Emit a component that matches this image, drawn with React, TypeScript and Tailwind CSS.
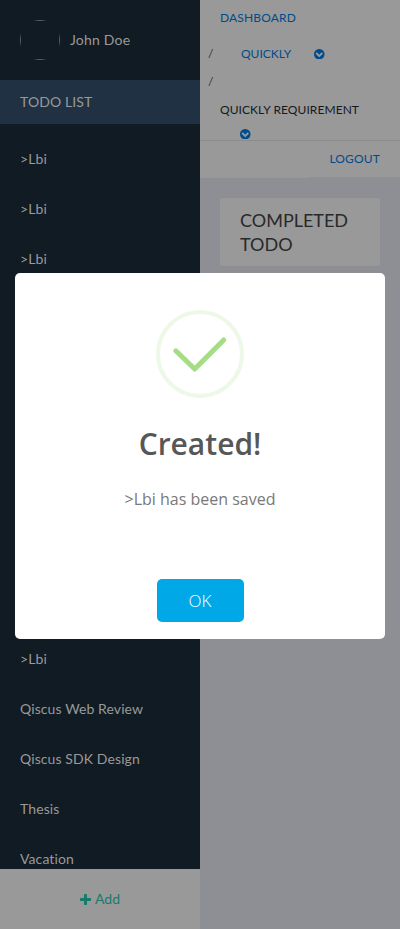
const todos = [
  ...Array.from({ length: 11 }, () => '>Lbi'),
  'Qiscus Web Review',
  'Qiscus SDK Design',
  'Thesis',
  'Vacation',
];

function ChevronCircle() {
  return (
    <svg width="10.5" height="10.5" viewBox="128 128 1536 1536" fill="currentColor">
      <path d="M941 1299l454-454q19-19 19-45t-19-45l-102-102q-19-19-45-19t-45 19l-307 307-307-307q-19-19-45-19t-45 19l-102 102q-19 19-19 45t19 45l454 454q19 19 45 19t45-19zm723-403q0 209-103 385.5t-279.5 279.5-385.5 103-385.5-103-279.5-279.5-103-385.5 103-385.5 279.5-279.5 385.5-103 385.5 103 279.5 279.5 103 385.5z" />
    </svg>
  );
}

function PlusIcon() {
  return (
    <svg width="11" height="11" viewBox="192 128 1408 1408" fill="currentColor">
      <path d="M1600 736v192q0 40-28 68t-68 28h-416v416q0 40-28 68t-68 28h-192q-40 0-68-28t-28-68v-416h-416q-40 0-68-28t-28-68v-192q0-40 28-68t68-28h416v-416q0-40 28-68t68-28h192q40 0 68 28t28 68v416h416q40 0 68 28t28 68z" />
    </svg>
  );
}

function AvatarOutline() {
  return (
    <svg width="40" height="40" viewBox="0 0 40 40">
      <defs>
        <linearGradient id="fadeX">
          <stop stopColor="#626669" stopOpacity="0" />
          <stop offset=".5" stopColor="#626669" />
          <stop offset="1" stopColor="#626669" stopOpacity="0" />
        </linearGradient>
        <linearGradient id="fadeY" x2="0" y2="1">
          <stop stopColor="#626669" stopOpacity="0" />
          <stop offset=".5" stopColor="#626669" />
          <stop offset="1" stopColor="#626669" stopOpacity="0" />
        </linearGradient>
      </defs>
      <rect x="13" width="14" height="1" fill="url(#fadeX)" />
      <rect x="13" y="39" width="14" height="1" fill="url(#fadeX)" />
      <rect y="13" width="1" height="14" fill="url(#fadeY)" />
      <rect x="39" y="13" width="1" height="14" fill="url(#fadeY)" />
    </svg>
  );
}

function Sidebar() {
  return (
    <aside className="flex h-full w-[200px] shrink-0 flex-col bg-[#111b23] text-sm tracking-[0.1px] text-[#999]">
      <div className="flex h-20 shrink-0 items-center gap-2.5 px-5">
        <AvatarOutline />
        <span className="tracking-[0.2px]">John Doe</span>
      </div>
      <h2 className="flex h-11 shrink-0 items-center bg-[#1f3142] px-5">TODO LIST</h2>
      <ul className="min-h-0 flex-1 overflow-hidden pt-2.5">
        {todos.map((todo, i) => (
          <li key={i} className="flex h-[50px] items-center px-5">{todo}</li>
        ))}
      </ul>
      <button className="flex h-[60px] shrink-0 items-center justify-center gap-1 bg-[#999] text-[#167b6d]">
        <PlusIcon />
        <span className="tracking-normal">Add</span>
      </button>
    </aside>
  );
}

function Main() {
  return (
    <main className="min-w-0 flex-1">
      <nav className="h-[141px] border-b border-[#8d8d8d] bg-[#999] text-xs text-[#004c8b]">
        <div className="flex h-9 items-center px-5 tracking-[0.15px]">DASHBOARD</div>
        <div className="flex h-9 items-center pl-2">
          <span className="w-[33px] text-[#333]">/</span>
          <span className="w-[73px]">QUICKLY</span>
          <ChevronCircle />
        </div>
        <div className="flex h-5 items-center pl-2 text-[#333]">/</div>
        <div className="flex h-9 items-center pl-5 tracking-[0.07px] text-[#14191e]">QUICKLY REQUIREMENT</div>
        <div className="flex h-3 items-center pl-10">
          <ChevronCircle />
        </div>
      </nav>
      <div className="flex h-[37px]">
        <div className="w-[109px] bg-[#999]" />
        <div className="flex h-9 flex-1 items-center justify-end bg-[#999] pr-5 text-xs tracking-[0.15px] text-[#004c8b]">LOGOUT</div>
      </div>
      <section className="mx-5 mt-5 h-[68px] rounded-[2px] bg-[#999] px-5 pt-2.5 text-lg leading-6 text-[#292929]">
        COMPLETED TODO
      </section>
    </main>
  );
}

function SuccessDialog() {
  return (
    <div className="absolute top-[273px] left-[15px] flex h-[366px] w-[370px] flex-col items-center rounded-[5px] bg-white pt-[37px] font-['Open_Sans',sans-serif]">
      <svg width="88" height="88" viewBox="0 0 88 88" fill="none" className="shrink-0">
        <circle cx="44" cy="44" r="42" stroke="#edf8e7" strokeWidth="4" />
        <path d="M19.8 40.8L38.7 59L67.7 30" stroke="#a5dc86" strokeWidth="5" strokeLinecap="round" strokeLinejoin="round" />
      </svg>
      <h1 className="mt-[26px] text-[30px] leading-10 font-semibold text-[#575757]">Created!</h1>
      <p className="mt-[23px] text-base leading-6 text-[#797979]">&gt;Lbi has been saved</p>
      <button className="mt-[68px] h-[43px] w-[87px] rounded-[5px] bg-[#00a8e8] text-[17px] font-light text-white">OK</button>
    </div>
  );
}

export default function App() {
  return (
    <div className="relative flex h-[929px] w-full overflow-hidden bg-[#8e8f94] font-['Lato',sans-serif]">
      <Sidebar />
      <Main />
      <SuccessDialog />
    </div>
  );
}
